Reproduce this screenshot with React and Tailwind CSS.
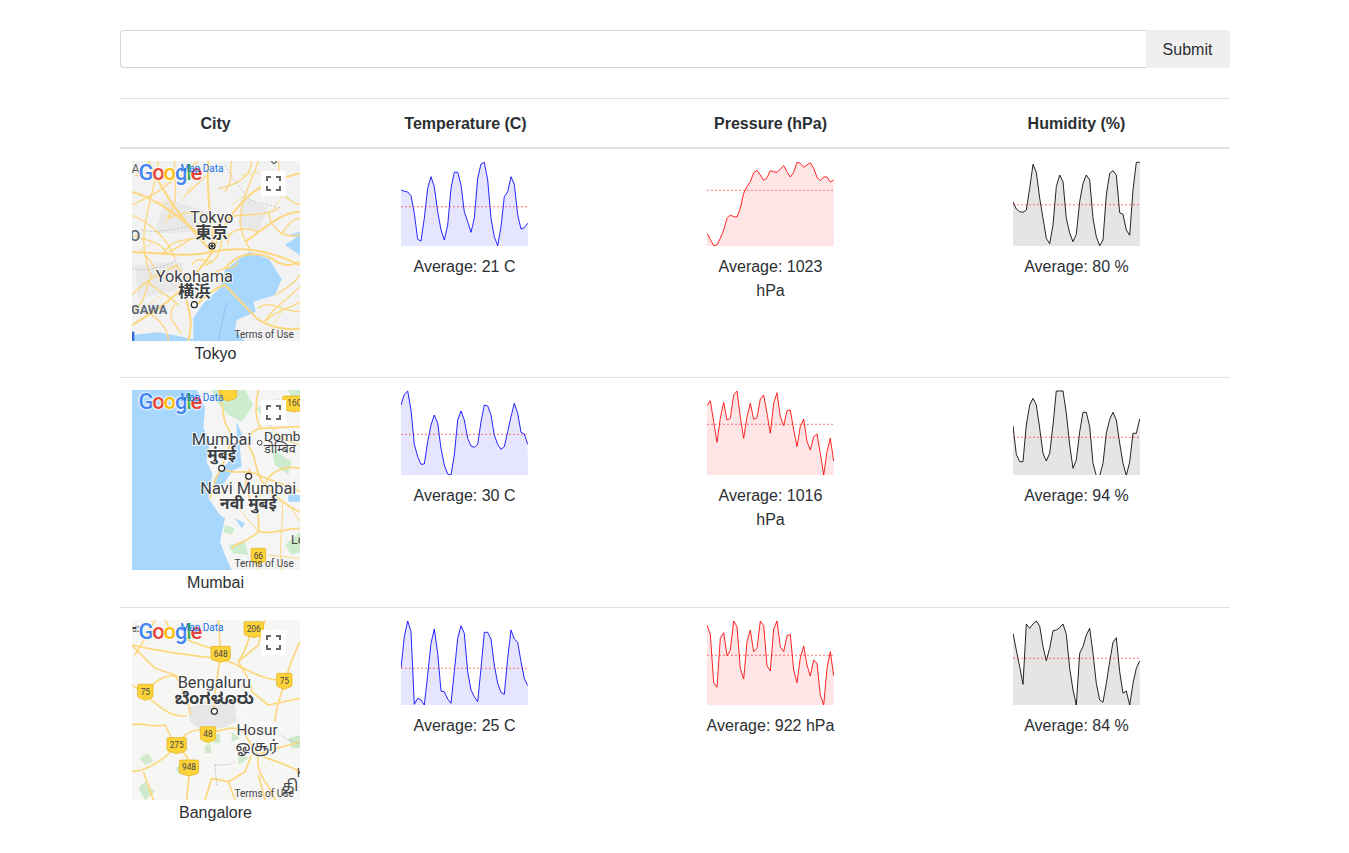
import React from 'react';

// y values read off the forecast charts, one every 10/3 px
let rows = [
  {
    city: 'Tokyo',
    nameClass: 'h-6',
    map: TokyoMap,
    temp: { avg: 'Average: 21 C', ref: 155, off: 6, data: [105,109,111,122,175,253,258,190,100,65,95,170,225,255,210,100,52,52,90,170,200,232,190,70,27,22,75,190,245,272,215,125,110,65,88,180,222,218,205] },
    pressure: { avg: 'Average: 1023 hPa', ref: 106, off: 6, data: [235,253,272,270,250,225,190,180,185,186,160,115,95,80,53,46,60,76,68,47,50,52,42,32,50,66,52,22,25,37,30,23,40,67,77,66,66,81,75] },
    humidity: { avg: 'Average: 80 %', ref: 149, off: 6, data: [140,162,170,172,165,100,28,52,130,190,250,266,210,95,60,80,190,235,260,238,140,85,60,75,190,245,272,255,120,55,47,60,173,178,225,241,105,22,22,33] },
  },
  {
    city: 'Mumbai',
    nameClass: 'h-[25px]',
    map: MumbaiMap,
    temp: { avg: 'Average: 30 C', ref: 148, off: 5, data: [60,28,18,75,178,215,238,237,170,120,90,115,190,240,267,270,210,105,78,105,160,183,187,178,110,60,63,90,150,178,193,185,140,95,55,85,142,147,178] },
    pressure: { avg: 'Average: 1016 hPa', ref: 118, off: 5, data: [62,47,110,172,100,52,105,100,30,18,95,160,95,55,103,98,42,30,85,145,55,23,95,122,77,75,135,185,125,102,170,195,155,147,205,270,200,160,228] },
    humidity: { avg: 'Average: 94 %', ref: 157, off: 5, data: [122,208,230,230,120,60,40,60,130,205,228,205,120,18,18,18,85,180,250,225,140,82,82,125,235,272,272,235,145,103,82,105,175,235,272,230,145,145,102] },
  },
  {
    city: 'Bangalore',
    nameClass: 'h-6',
    map: BangaloreMap,
    temp: { avg: 'Average: 25 C', ref: 160, off: 5, data: [160,65,18,50,268,250,255,270,180,85,42,115,228,230,252,265,170,70,32,55,170,225,245,260,160,52,52,72,150,205,232,238,130,45,72,82,140,190,212] },
    pressure: { avg: 'Average: 922 hPa', ref: 121, off: 5, data: [30,58,203,217,70,53,122,105,18,35,160,192,80,45,110,100,18,32,152,168,42,18,95,110,62,58,165,203,128,93,150,183,135,145,240,270,160,110,182] },
    humidity: { avg: 'Average: 84 %', ref: 130, off: 5, data: [55,105,155,208,27,40,27,18,33,95,137,100,47,45,38,27,58,160,225,270,115,95,60,40,115,205,255,262,205,140,82,68,170,235,228,270,205,160,138] },
  },
];

function Sparkline({ chart, color }) {
  let toY = (v) => (v / 3 - chart.off).toFixed(1);
  let pts = chart.data.map((v, i) => `${((i * 10) / 3).toFixed(1)},${toY(v)}`).join(' ');
  let area = `0,85 ${pts} 127,85`;
  return (
    <svg width="127" height="85" viewBox="0 0 127 85" className="block">
      <polygon points={area} fill={color} fillOpacity="0.1" />
      <polyline points={pts} fill="none" stroke={color} strokeOpacity="0.85" strokeWidth="1" />
      <line x1="0" x2="127" y1={toY(chart.ref)} y2={toY(chart.ref)} stroke="red" strokeOpacity="0.75" strokeWidth="0.7" strokeDasharray="2 2" />
    </svg>
  );
}

function ChartCell({ chart, color }) {
  return (
    <td className="border-t border-[#dee2e6] p-3 align-top">
      <div className="mx-auto w-[128px] text-center">
        <Sparkline chart={chart} color={color} />
        <div className="mt-[9px]">{chart.avg}</div>
      </div>
    </td>
  );
}

// label with the white halo that map labels have
function Label({ x, y, size = 49, weight = 400, children, font = 'Roboto, "Noto Sans", sans-serif' }) {
  return (
    <text x={x} y={y} fontSize={size} fontWeight={weight} textAnchor="middle" fill="#3c4043" stroke="#fff" strokeWidth="6" strokeOpacity="0.85" style={{ paintOrder: 'stroke', fontFamily: font }}>
      {children}
    </text>
  );
}

function Shield({ x, y, w = 60, text }) {
  let side = (w - 16) / 2;
  return (
    <g>
      <path d={`M${x + 4} ${y}h${w - 8}q4 0 4 4v30q0 6-8 8l-${side} 6-${side}-6q-8-2-8-8v-30q0-4 4-4z`} fill="#fdd33a" stroke="#e3ac14" strokeWidth="2" />
      <text x={x + w / 2} y={y + 31} fontSize="25" textAnchor="middle" fill="#444" style={{ fontFamily: 'Roboto, sans-serif' }}>{text}</text>
    </g>
  );
}

function Dot({ x, y, big }) {
  return (
    <g>
      <circle cx={x} cy={y} r="9" fill="#fff" stroke="#222" strokeWidth="3.5" />
      {big && <circle cx={x} cy={y} r="5" fill="#222" />}
    </g>
  );
}

function Roads({ items, w = 4, color = '#fdd77d' }) {
  return (
    <g fill="none" stroke={color} strokeWidth={w} strokeLinejoin="round">
      {items.map((d, i) => <path key={i} d={d} />)}
    </g>
  );
}

function TokyoMap() {
  return (
    <svg width="168" height="180" viewBox="21 18 504 540" className="block">
      <rect x="0" y="0" width="600" height="600" fill="#f2f2f2" />
      <path d="M120 130L250 170L240 230L90 235ZM30 330L170 320L180 400L40 430ZM350 120L430 160L400 230L340 210Z" fill="#e8e8e8" />
      <path d="M205 560V490L235 445L285 400L300 345L372 290L432 312L470 372L450 420L385 440L392 470L335 495L330 525L360 560Z" fill="#a8d7fd" />
      <path d="M20 560V540L100 532L205 552V560Z" fill="#a8d7fd" />
      <path d="M480 270L525 240V300ZM490 240L525 230V250Z" fill="#a8d7fd" />
      <Roads
        w={6}
        items={[
          'M20 292C100 290 180 310 260 290C320 280 400 270 525 330',
          'M262 290C270 220 240 150 250 18',
          'M262 290C290 220 340 130 420 90C460 75 500 60 525 55',
          'M262 290C200 230 120 130 70 18',
          'M262 290C230 340 160 420 100 460C70 480 40 500 20 510',
          'M20 110C90 130 180 190 240 260',
          'M360 260C420 220 470 170 525 170',
          'M300 340C340 290 400 290 440 310C480 340 500 330 525 320',
          'M215 450C240 420 280 395 300 390L395 490C420 510 480 530 525 520',
          'M180 400C180 450 210 480 190 558',
        ]}
      />
      <Roads
        w={4}
        items={[
          'M100 18C90 90 70 150 60 210C50 270 60 320 80 370',
          'M20 180C70 200 130 250 150 310',
          'M400 18C380 80 350 120 345 200C350 240 360 260 380 290',
          'M525 395C480 440 440 460 420 500',
          'M20 420C60 380 100 350 160 330',
          'M30 60C80 70 120 80 170 60L220 18',
          'M460 18C470 70 440 120 525 150',
          'M280 100C340 90 380 60 380 18',
          'M340 320C330 350 290 330 260 360',
          'M110 300C140 260 150 260 200 250',
          'M60 470C110 490 130 530 130 558',
          'M430 170C440 230 480 250 525 240',
          'M150 18C140 60 170 120 130 190',
          'M20 240C60 260 100 250 130 300',
          'M420 500C460 460 500 460 525 440',
          'M240 330C280 320 290 280 290 240',
          'M20 150C60 130 110 110 150 70',
          'M130 190C170 170 210 170 250 180',
          'M300 190C350 170 410 190 460 160',
          'M230 250C190 240 170 280 130 290',
          'M310 270C300 230 340 210 400 230',
          'M470 240C490 200 510 190 525 190',
          'M70 380C100 410 130 420 160 450',
          'M200 330C220 300 240 320 260 320',
          'M60 300C90 330 90 350 120 370',
          'M20 470C50 450 60 430 70 380',
          'M450 420C490 400 510 380 525 360',
          'M400 460C430 430 470 470 525 470',
          'M150 450C120 480 150 510 170 535',
          'M320 18C310 50 330 70 300 110',
          'M180 120C220 90 230 70 250 60',
          'M150 330C180 360 190 380 220 390',
        ]}
      />
      <Roads
        w={3}
        color="#fbe3a8"
        items={[
          'M40 40L110 90L180 60',
          'M350 60L420 50L470 100',
          'M60 130L140 150L120 210',
          'M480 110L440 170',
          'M90 260L40 290',
          'M440 520L470 470',
          'M260 230L320 240',
          'M110 420L70 450',
          'M200 90L170 140',
          'M370 110L320 150',
        ]}
      />
      <path d="M300 30C320 70 340 90 370 130C400 150 440 150 470 160" fill="none" stroke="#aaa" strokeWidth="2" strokeDasharray="6 6" />
      <path d="M50 225C90 235 130 225 190 215M20 340C60 350 120 340 160 310" fill="none" stroke="#aaa" strokeWidth="2" strokeDasharray="6 6" />
      <path d="M305 440L280 558" fill="none" stroke="#8ab4e8" strokeWidth="2" />
      <path d="M20 530H28V558H20Z" fill="#3367d6" />
      <circle cx="447" cy="18" r="7" fill="#fff" stroke="#222" strokeWidth="3" />
      <Label x="260" y="203">Tokyo</Label>
      <Label x="260" y="250" weight={700} font='"Noto Sans CJK JP", sans-serif'>東京</Label>
      <Dot x="261" y="273" big />
      <Label x="208" y="380">Yokohama</Label>
      <Label x="208" y="425" weight={700} font='"Noto Sans CJK JP", sans-serif'>横浜</Label>
      <Dot x="208" y="449" />
      <text x="18" y="478" fontSize="38" fontWeight="700" fill="#5f6b7a" style={{ fontFamily: 'Roboto, sans-serif' }}>GAWA</text>
      <text x="14" y="258" fontSize="46" fontWeight="500" fill="#5f6b7a" style={{ fontFamily: 'Roboto, sans-serif' }}>O</text>
      <text x="20" y="55" fontSize="36" fill="#555" style={{ fontFamily: 'Roboto, sans-serif' }}>A</text>
    </svg>
  );
}

function MumbaiMap() {
  return (
    <svg width="168" height="180" viewBox="21 15 504 540" className="block">
      <rect x="0" y="0" width="600" height="600" fill="#a8d7fe" />
      <path d="M215 15L240 70L235 130L255 165L245 230L262 265L250 340L285 390L300 400L285 470L300 510L320 555H525V15Z" fill="#f5f5f5" />
      <path d="M335 110L352 150L345 190L350 245L325 255L300 290L272 325L268 280L315 225L335 170Z" fill="#a8d7fe" />
      <path d="M490 330H525V350H490ZM330 400L360 415L350 430Z" fill="#a8d7fe" />
      <path d="M260 15H360L385 60L350 110L310 90L275 50ZM440 190L500 230L490 270L450 240ZM395 70L460 40L480 100L430 125ZM490 15H525V60L500 40ZM300 420L330 430L320 450L295 440ZM310 480L360 470L370 510L325 505ZM480 480L525 440V500L500 510Z" fill="#cdeccd" />
      <Roads
        w={5}
        items={[
          'M280 15C300 70 290 110 310 130C330 170 300 210 290 250C260 290 265 320 255 340',
          'M370 180C400 230 390 270 420 300C450 340 500 370 525 380',
          'M300 255C330 270 370 250 400 270C440 290 470 290 525 320',
          'M400 440C405 380 390 360 400 340M400 440C440 450 480 430 525 430',
          'M400 440C370 470 340 470 320 490',
          'M400 15C390 60 390 110 410 130L525 125',
          'M370 180C370 150 385 130 410 130',
          'M375 250L360 300L375 340',
          'M420 300C430 260 480 240 525 250',
        ]}
      />
      <Roads
        w={3}
        items={[
          'M470 340C480 400 460 450 470 555',
          'M400 500V555',
          'M330 350C350 390 380 410 400 440',
          'M440 125C470 170 500 170 525 180',
          'M500 370L525 410',
          'M430 510L525 520',
          'M420 300L400 340',
        ]}
      />
      <Shield x={378} y={490} w={44} text="66" />
      <Shield x={473} y={33} w={70} text="160" />
      <Shield x={285} y={0} w={50} text="" />
      <Label x="290" y="180">Mumbai</Label>
      <Label x="290" y="225" weight={700} size="48" font='"Noto Sans", "Noto Sans Devanagari", sans-serif'>मुंबई</Label>
      <Dot x="290" y="250" />
      <Dot x="371" y="274" />
      <Label x="370" y="328">Navi Mumbai</Label>
      <Label x="370" y="373" weight={700} size="48" font='"Noto Sans", "Noto Sans Devanagari", sans-serif'>नवी मुंबई</Label>
      <circle cx="404" cy="173" r="7" fill="#fff" stroke="#444" strokeWidth="3" />
      <text x="417" y="167" fontSize="41" fill="#3c4043" style={{ fontFamily: 'Roboto, sans-serif' }}>Domb</text>
      <text x="417" y="205" fontSize="38" fill="#3c4043" style={{ fontFamily: '"Noto Sans", "Noto Sans Devanagari", sans-serif' }}>डोम्बिव</text>
      <text x="498" y="478" fontSize="38" fill="#444" style={{ fontFamily: 'Roboto, sans-serif' }}>Lo</text>
    </svg>
  );
}

function BangaloreMap() {
  return (
    <svg width="168" height="180" viewBox="21 15 504 540" className="block">
      <rect x="0" y="0" width="600" height="600" fill="#f6f6f4" />
      <path d="M190 280L240 260L330 265L335 320L290 340L230 345L195 320Z" fill="#e6e6e6" />
      <path d="M44 430L70 415L85 440L60 450ZM265 360L285 355L285 385L265 385ZM240 395L255 385L260 415L240 415ZM340 410L370 430L340 450ZM320 350L345 370L320 380ZM490 370L525 360V400L500 400ZM40 520L60 500L90 530L60 555ZM150 460L170 450L165 480Z" fill="#cfeacb" />
      <Roads
        w={5}
        items={[
          'M20 90C110 110 180 120 280 130C340 140 400 200 480 195',
          'M280 15C285 60 285 90 285 130C280 170 270 220 265 290',
          'M375 50C370 100 350 120 340 140C370 190 380 210 380 230',
          'M525 80C500 130 490 170 480 195C470 240 450 280 450 320',
          'M60 230C100 190 130 170 180 190',
          'M20 210C60 230 130 320 185 300',
          'M150 390C180 360 200 340 230 345',
          'M150 390C130 430 60 470 20 470',
          'M250 355C280 350 320 330 350 345L400 420C440 435 490 450 525 470',
          'M195 450C190 420 170 410 150 390',
          'M195 450L185 555',
          'M380 420L360 470L310 500L330 555',
          'M380 230L430 270L525 250',
          'M20 330C50 320 80 340 120 330L150 390',
          'M55 470L85 555',
          'M400 420C430 400 470 400 525 380',
          'M420 555L400 480',
          'M20 90L90 160L150 180',
          'M90 15L60 70L30 120',
          'M150 180C180 240 195 260 195 300',
          'M340 140L400 90L420 15',
          'M400 420C390 480 430 500 450 555',
          'M310 500L260 490L240 555',
          'M120 15C140 60 190 80 260 100',
        ]}
      />
      <path d="M195 300C160 290 150 320 170 330M330 290C370 320 400 330 440 320" fill="none" stroke="#fff" strokeWidth="2" />
      <path d="M270 450C300 450 320 450 330 440M470 360C490 380 510 380 525 385M270 450L275 510" fill="none" stroke="#999" strokeWidth="2" strokeDasharray="4 4" />
      <Shield x={357} y={20} w={58} text="206" />
      <Shield x={258} y={94} w={58} text="648" />
      <Shield x={455} y={175} w={46} text="75" />
      <Shield x={38} y={208} w={46} text="75" />
      <Shield x={226} y={335} w={46} text="48" />
      <Shield x={126} y={368} w={58} text="275" />
      <Shield x={163} y={435} w={58} text="948" />
      <Label x="268" y="220">Bengaluru</Label>
      <Label x="268" y="268" weight={700} font='"Noto Sans", "Noto Sans Kannada", sans-serif'>ಬೆಂಗಳೂರು</Label>
      <Dot x="268" y="289" />
      <Label x="396" y="360" size="46">Hosur</Label>
      <Label x="396" y="408" size="46" font='"Noto Sans", "Noto Sans Tamil", sans-serif'>ஓசூர்</Label>
      <text x="470" y="528" fontSize="46" fill="#444" style={{ fontFamily: '"Noto Sans", "Noto Sans Tamil", sans-serif' }}>தி</text>
      <text x="515" y="485" fontSize="38" fill="#444" style={{ fontFamily: 'Roboto, sans-serif' }}>K</text>
      <text x="22" y="50" fontSize="34" fill="#444" style={{ fontFamily: '"Noto Sans", sans-serif' }}>ಕು</text>
    </svg>
  );
}

function MapBox({ children }) {
  return (
    <div className="relative h-[180px] w-[168px] overflow-hidden">
      {children}
      <div className="absolute left-[7px] top-[1px] font-['Roboto'] text-[22px] font-medium leading-[22px] tracking-[-1.2px] [text-shadow:0_0_2px_#fff,0_0_2px_#fff,0_0_3px_#fff]">
        <span className="text-[#4285f4]">G</span>
        <span className="text-[#ea4335]">o</span>
        <span className="text-[#fbbc05]">o</span>
        <span className="text-[#4285f4]">g</span>
        <span className="text-[#34a853]">l</span>
        <span className="text-[#ea4335]">e</span>
      </div>
      <div className="absolute left-[49px] top-[1px] font-['Roboto'] text-[10px] leading-[14px] text-[#1a73e8]">Map Data</div>
      <div className="absolute left-[103px] top-[167px] font-['Roboto'] text-[10px] leading-[14px] text-[#444]">Terms of Use</div>
      <div className="absolute left-[129px] top-[10px] flex h-[25px] w-[25px] items-center justify-center bg-white">
        <svg width="15" height="15" viewBox="0 0 15 15" fill="none" stroke="#666" strokeWidth="2">
          <path d="M1 5V1H5M10 1H14V5M14 10V14H10M5 14H1V10" />
        </svg>
      </div>
    </div>
  );
}

export default function App() {
  return (
    <div className="mx-auto w-[1110px] pt-[30px] font-['Liberation_Sans',Arial,sans-serif] text-base leading-6 text-[#2b2f33]">
      <form className="mb-[30px] flex h-[38px]" onSubmit={(e) => e.preventDefault()}>
        <input type="text" className="h-full flex-1 rounded-l border border-r-0 border-[#ced4da] bg-white px-3 outline-none" />
        <button type="submit" className="h-full w-[84px] rounded-r bg-[#efefef] pt-px text-[#2b2f33]">Submit</button>
      </form>

      <table className="w-full table-fixed border-collapse">
        <thead>
          <tr>
            <th className="w-[192px] border-t border-b-2 border-[#dee2e6] px-3 pb-[11px] pt-[13px] text-center font-bold">City</th>
            <th className="w-[306px] border-t border-b-2 border-[#dee2e6] pb-[11px] pl-[13px] pr-[11px] pt-[13px] text-center font-bold">Temperature (C)</th>
            <th className="w-[306px] border-t border-b-2 border-[#dee2e6] px-3 pb-[11px] pt-[13px] text-center font-bold">Pressure (hPa)</th>
            <th className="border-t border-b-2 border-[#dee2e6] px-3 pb-[11px] pt-[13px] text-center font-bold">Humidity (%)</th>
          </tr>
        </thead>
        <tbody>
          {rows.map((row) => (
            <tr key={row.city}>
              <td className="border-t border-[#dee2e6] p-3 align-top">
                <MapBox><row.map /></MapBox>
                <div className={`${row.nameClass} pt-px text-center`}>{row.city}</div>
              </td>
              <ChartCell chart={row.temp} color="blue" />
              <ChartCell chart={row.pressure} color="red" />
              <ChartCell chart={row.humidity} color="black" />
            </tr>
          ))}
        </tbody>
      </table>
    </div>
  );
}
